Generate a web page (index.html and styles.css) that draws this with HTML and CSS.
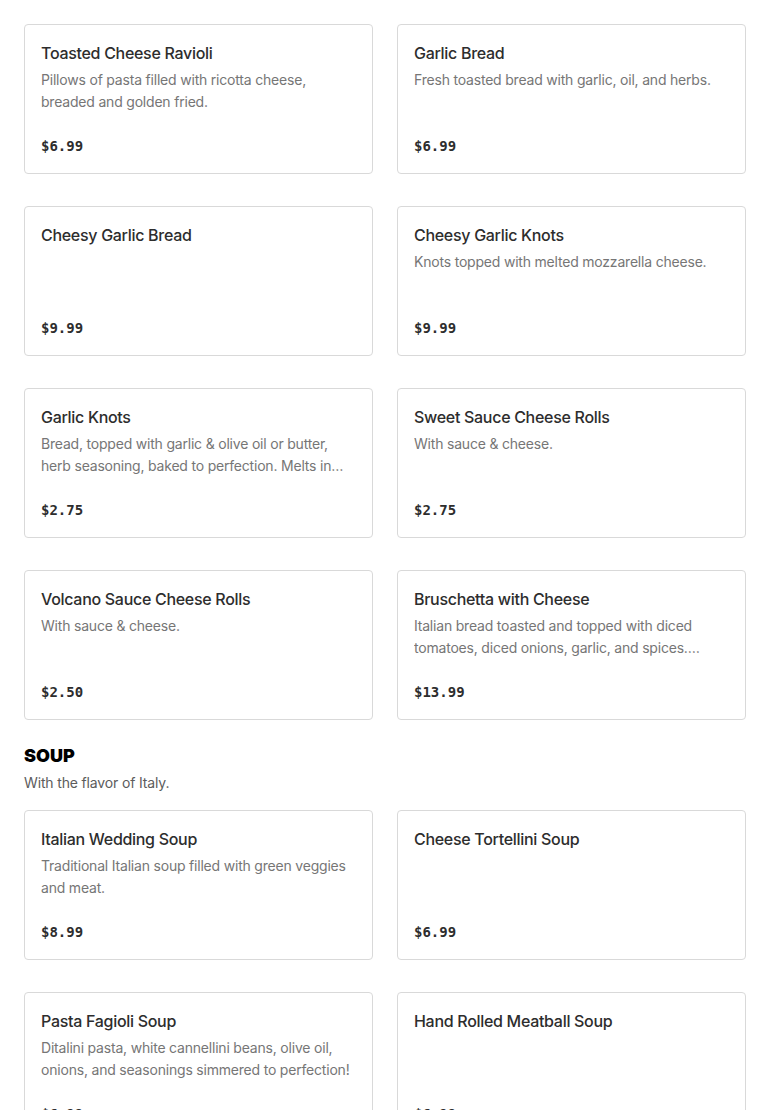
FILE: index.html
```html
<!DOCTYPE html>
<html>
<head>
<meta charset="utf-8">
<link rel="stylesheet" href="styles.css">
</head>
<body>
<div class="menu">
  <div class="grid">
    <div class="card"><div class="title">Toasted Cheese Ravioli</div><div class="desc">Pillows of pasta filled with ricotta cheese, breaded and golden fried.</div><div class="price">$6.99</div></div>
    <div class="card"><div class="title">Garlic Bread</div><div class="desc">Fresh toasted bread with garlic, oil, and herbs.</div><div class="price">$6.99</div></div>
    <div class="card"><div class="title">Cheesy Garlic Bread</div><div class="desc"></div><div class="price">$9.99</div></div>
    <div class="card"><div class="title">Cheesy Garlic Knots</div><div class="desc">Knots topped with melted mozzarella cheese.</div><div class="price">$9.99</div></div>
    <div class="card"><div class="title">Garlic Knots</div><div class="desc">Bread, topped with garlic &amp; olive oil or butter, herb seasoning, baked to perfection. Melts in your mouth delicious.</div><div class="price">$2.75</div></div>
    <div class="card"><div class="title">Sweet Sauce Cheese Rolls</div><div class="desc">With sauce &amp; cheese.</div><div class="price">$2.75</div></div>
    <div class="card"><div class="title">Volcano Sauce Cheese Rolls</div><div class="desc">With sauce &amp; cheese.</div><div class="price">$2.50</div></div>
    <div class="card"><div class="title">Bruschetta with Cheese</div><div class="desc">Italian bread toasted and topped with diced tomatoes, diced onions, garlic, and spices. Topped with melted mozzarella cheese.</div><div class="price">$13.99</div></div>
  </div>
  <div class="section-head">
    <h2 class="section-title">SOUP</h2>
    <p class="section-sub">With the flavor of Italy.</p>
  </div>
  <div class="grid">
    <div class="card"><div class="title">Italian Wedding Soup</div><div class="desc">Traditional Italian soup filled with green veggies and meat.</div><div class="price">$8.99</div></div>
    <div class="card"><div class="title">Cheese Tortellini Soup</div><div class="desc"></div><div class="price">$6.99</div></div>
    <div class="card"><div class="title">Pasta Fagioli Soup</div><div class="desc">Ditalini pasta, white cannellini beans, olive oil, onions, and seasonings simmered to perfection!</div><div class="price">$6.99</div></div>
    <div class="card"><div class="title">Hand Rolled Meatball Soup</div><div class="desc"></div><div class="price">$6.99</div></div>
  </div>
</div>
</body>
</html>
```

FILE: styles.css
```css
html, body {
  margin: 0;
  padding: 0;
  background: #ffffff;
}
body {
  font-family: "Inter", "Liberation Sans", sans-serif;
  color: #2d2d2d;
}
.menu {
  padding: 24px 24px 0 24px;
}
.grid {
  display: grid;
  grid-template-columns: 349px 349px;
  column-gap: 24px;
  row-gap: 32px;
}
.card {
  box-sizing: border-box;
  height: 150px;
  border: 1px solid #d9d9d9;
  border-radius: 4px;
  padding: 16px;
  display: flex;
  flex-direction: column;
}
.title {
  font-size: 16px;
  font-weight: 500;
  line-height: 24px;
  letter-spacing: -0.3px;
  color: #2d2d2d;
}
.desc {
  margin-top: 4px;
  font-size: 14px;
  line-height: 22px;
  letter-spacing: -0.2px;
  color: #767676;
  display: -webkit-box;
  -webkit-line-clamp: 2;
  -webkit-box-orient: vertical;
  overflow: hidden;
}
.price {
  margin-top: auto;
  font-family: "DejaVu Sans Mono", "Liberation Mono", monospace;
  font-weight: bold;
  font-size: 14px;
  line-height: 22px;
  color: #2d2d2d;
}
.section-head {
  padding: 24px 0 16px 0;
}
.section-title {
  margin: 0;
  font-family: "Inter", sans-serif;
  font-weight: 900;
  font-size: 18px;
  line-height: 24px;
  color: #000;
}
.section-sub {
  margin: 4px 0 0 0;
  font-size: 14px;
  line-height: 22px;
  letter-spacing: -0.15px;
  color: #5c5c5c;
}
```
